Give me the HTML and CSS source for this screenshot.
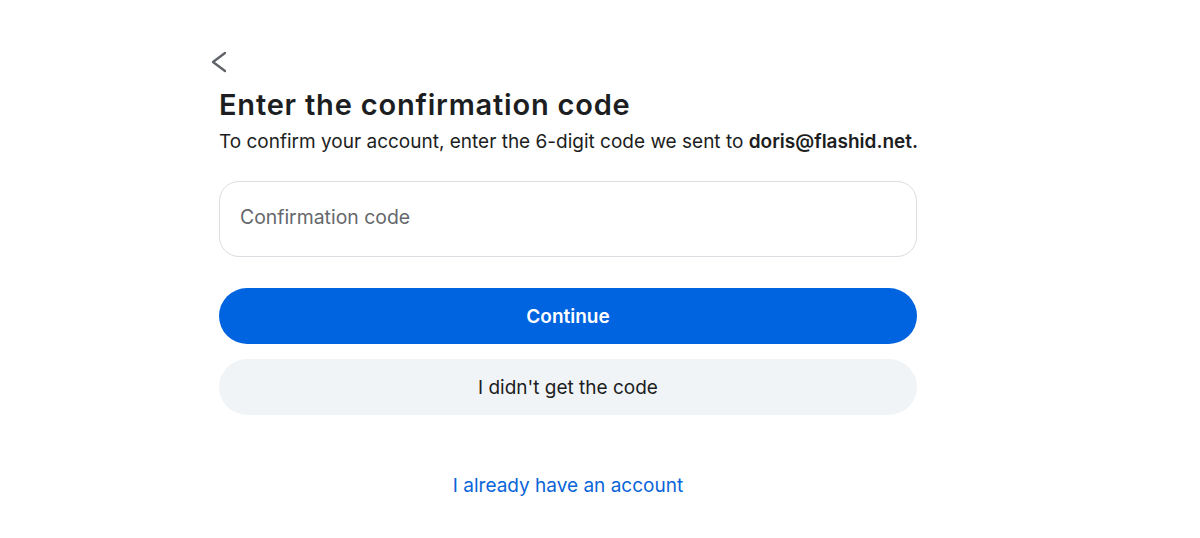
FILE: index.html
```html
<!DOCTYPE html>
<html lang="en">
<head>
<meta charset="utf-8">
<title>Enter the confirmation code</title>
<link rel="stylesheet" href="styles.css">
</head>
<body>
<main class="page">
  <button class="back" aria-label="Back">
    <svg viewBox="0 0 24 24" width="24" height="24"><path d="M20 3 L8 12 L20 21" fill="none" stroke="#5f6368" stroke-width="2.3" stroke-linecap="round" stroke-linejoin="round"/></svg>
  </button>
  <h1 class="title">Enter the confirmation code</h1>
  <p class="subtitle">To confirm your account, enter the 6-digit code we sent to <strong>doris@flashid.net.</strong></p>
  <div class="field"><input class="input" type="text" placeholder="Confirmation code"></div>
  <div class="actions">
    <button class="btn btn-primary">Continue</button>
    <button class="btn btn-secondary">I didn't get the code</button>
  </div>
  <a class="link" href="#">I already have an account</a>
</main>
</body>
</html>
```

FILE: styles.css
```css
html, body { margin: 0; padding: 0; background: #fff; }
body { font-family: Inter, "Noto Sans", Roboto, sans-serif; color: #1c2b33; }
.page { width: 698px; margin-left: 219px; padding-top: 50px; display: flex; flex-direction: column; }
.back { width: 24px; height: 24px; padding: 0; margin-left: -14px; border: 0; background: none; display: flex; }
.title { margin: 14px 0 0; font-size: 29px; line-height: 34px; font-weight: 600; letter-spacing: 0.8px; color: #1c1e21; }
.subtitle { margin: 8px 0 0; font-size: 19px; line-height: 24px; color: #1c1e21; white-space: nowrap; }
.subtitle strong { font-weight: 600; }
.field { margin-top: 27px; }
.input { box-sizing: border-box; width: 100%; height: 76px; border: 1px solid #dadde1; border-radius: 20px; padding: 0 20px 5px; font: inherit; font-size: 19.4px; color: #1c1e21; outline: none; }
.input::placeholder { color: #65686c; }
.actions { margin-top: 31px; display: flex; flex-direction: column; gap: 15px; }
.btn { height: 56px; border: 0; border-radius: 28px; font: inherit; font-size: 19px; }
.btn-primary { background: #0064e0; color: #fff; font-weight: 600; }
.btn-secondary { background: #f1f4f7; color: #1c1e21; }
.link { align-self: center; margin-top: 59px; color: #0a65d8; text-decoration: none; font-size: 19px; line-height: 24px; }
```
